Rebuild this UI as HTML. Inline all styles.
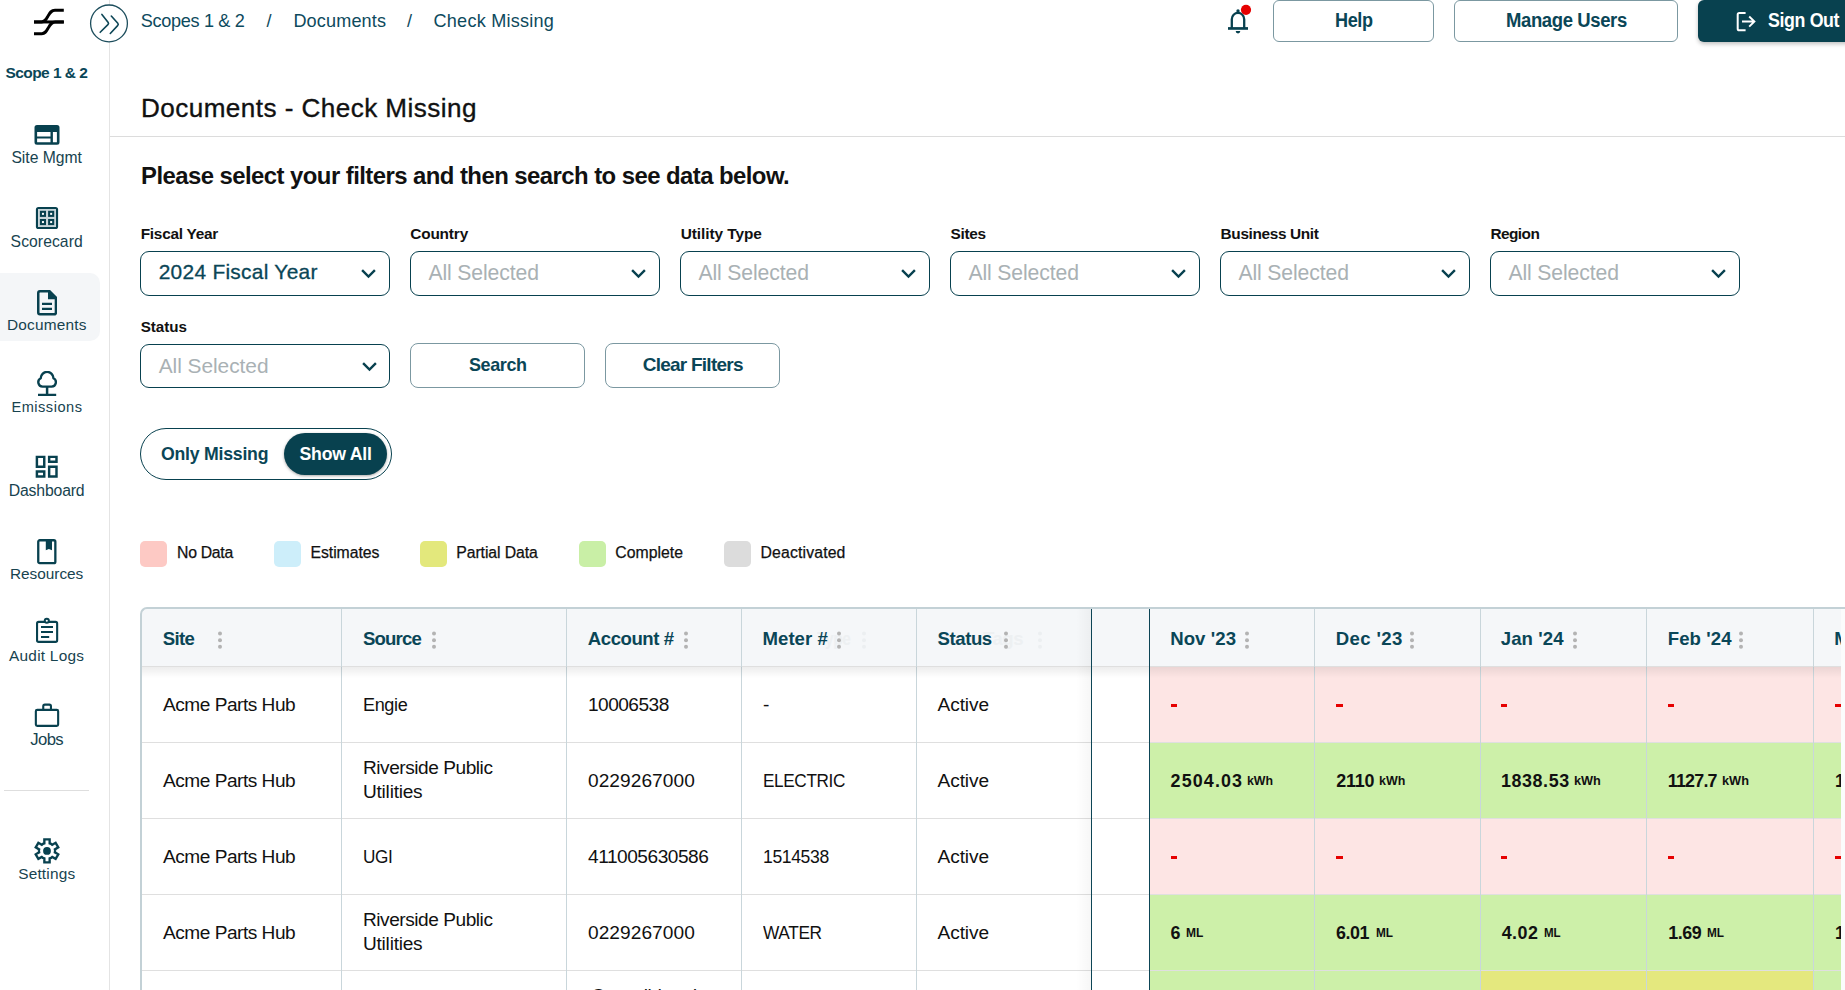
<!DOCTYPE html>
<html><head><meta charset="utf-8"><style>
html,body{margin:0;padding:0;background:#fff;}
body{width:1845px;height:990px;overflow:hidden;position:relative;font-family:"Liberation Sans",sans-serif;}
.t{position:absolute;white-space:pre;line-height:1;}
svg{display:block}
</style></head><body>
<div style="position:absolute;left:109px;top:0;width:1px;height:990px;background:#e4e4e4"></div>
<div style="position:absolute;left:0;top:273px;width:100px;height:68px;border-radius:0 10px 10px 0;background:#f4f6f8"></div>
<svg style="position:absolute;left:0;top:0" width="110" height="50" viewBox="0 0 110 50">
<path d="M34 21.95H63.8" stroke="#000" stroke-width="3" fill="none"/>
<path d="M34 21.9H41.5C44.5 21.9 45.6 20.3 47.6 16.8C49.6 13.3 50.9 10.25 55 10.25H63.8" stroke="#000" stroke-width="3" fill="none"/>
<path d="M34 33.7H41.8C44.8 33.7 45.9 32.1 47.9 28.6C49.9 25.1 51.2 22 55.3 22H63.8" stroke="#000" stroke-width="3" fill="none"/>
</svg>
<div class="t" style="left:5.40px;top:65px;font-size:15.5px;letter-spacing:-0.549px;font-weight:700;color:#0a4657;">Scope 1 &amp; 2</div>
<svg style="position:absolute;left:30px;top:120px" width="34" height="30" viewBox="30 120 34 30"><path fill-rule="evenodd" fill="#08414f" d="M37 125H57A2.5 2.5 0 0 1 59.5 127.5V142.2A2.5 2.5 0 0 1 57 144.7H37A2.5 2.5 0 0 1 34.5 142.2V127.5A2.5 2.5 0 0 1 37 125ZM37.1 132.1V136.6H50.5V132.1ZM37.1 138.6V142.3H50.5V138.6ZM52.9 132.1V142.3H56.9V132.1Z"/></svg>
<svg style="position:absolute;left:34px;top:205px" width="26" height="26" viewBox="34 205 26 26"><rect x="35.9" y="206.9" width="22.2" height="22.2" rx="2.6" fill="#08414f"/><rect x="38" y="209" width="18" height="18" fill="#c9d6da"/><rect x="39.9" y="210.8" width="6.1" height="6.1" fill="#08414f"/><rect x="41.949999999999996" y="212.85000000000002" width="2" height="2" fill="#fff"/><rect x="39.9" y="219.0" width="6.1" height="6.1" fill="#08414f"/><rect x="41.949999999999996" y="221.05" width="2" height="2" fill="#fff"/><rect x="48.1" y="210.8" width="6.1" height="6.1" fill="#08414f"/><rect x="50.15" y="212.85000000000002" width="2" height="2" fill="#fff"/><rect x="48.1" y="219.0" width="6.1" height="6.1" fill="#08414f"/><rect x="50.15" y="221.05" width="2" height="2" fill="#fff"/></svg>
<svg style="position:absolute;left:36.9px;top:290.3px" width="20.2" height="25.5" viewBox="0 0 20.2 25.5"><path d="M2.9 1.25H12L18.95 8.2V22.6A1.65 1.65 0 0 1 17.3 24.25H2.9A1.65 1.65 0 0 1 1.25 22.6V2.9A1.65 1.65 0 0 1 2.9 1.25Z" fill="none" stroke="#08414f" stroke-width="2.5"/><path d="M11 0H13L20.2 7.2V9.2H11Z" fill="#08414f"/><path d="M5 13.85H15M5 18.9H15" stroke="#08414f" stroke-width="2.1"/></svg>
<svg style="position:absolute;left:37px;top:370.5px" width="20.2" height="25.5" viewBox="0 0 20.2 25.5"><path d="M10.1 15.6H5.6A4.4 4.4 0 0 1 3.7 7.3A6.4 6.4 0 0 1 16.5 7.3A4.4 4.4 0 0 1 14.6 15.6Z" fill="none" stroke="#08414f" stroke-width="2.4" stroke-linejoin="round"/><path d="M10.1 15.6V23.5M1 23.9H19.2" stroke="#08414f" stroke-width="2.5"/></svg>
<svg style="position:absolute;left:32.2px;top:452.2px" width="29.4" height="29.4" viewBox="0 0 24 24"><path fill="#08414f" d="M19 5v2h-4V5h4M9 5v6H5V5h4m10 8v6h-4v-6h4M9 17v2H5v-2h4M21 3h-8v6h8V3zM11 3H3v10h8V3zm10 8h-8v10h8V11zm-10 4H3v6h8v-6z"/></svg>
<svg style="position:absolute;left:37.2px;top:539.2px" width="19.6" height="25.4" viewBox="0 0 19.6 25.4"><rect x="1.25" y="1.25" width="17.1" height="22.9" rx="1.5" fill="none" stroke="#08414f" stroke-width="2.3"/><path d="M8.8 1.5H15V11.3L11.9 9.9L8.8 11.3Z" fill="#08414f"/></svg>
<svg style="position:absolute;left:30px;top:614px" width="34" height="34" viewBox="30 614 34 34"><rect x="37.05" y="621.9" width="20.1" height="20" rx="1.6" fill="none" stroke="#08414f" stroke-width="2.1"/><circle cx="46.8" cy="620.7" r="2.05" fill="#fff" stroke="#08414f" stroke-width="2"/><path d="M41 627.05H53M41 632.05H53M41 637H49.2" stroke="#08414f" stroke-width="2.1"/></svg>
<svg style="position:absolute;left:30px;top:698px" width="34" height="34" viewBox="30 698 34 34"><rect x="35.85" y="709.85" width="22.3" height="16" rx="1.4" fill="none" stroke="#08414f" stroke-width="2.1"/><path d="M43.25 709.8V706.2A1.6 1.6 0 0 1 44.85 704.6H49.35A1.6 1.6 0 0 1 50.95 706.2V709.8" fill="none" stroke="#08414f" stroke-width="2.1"/></svg>
<svg style="position:absolute;left:30px;top:834px" width="34" height="34" viewBox="30 834 34 34"><path d="M44.35 843.30 L44.35 839.35 L49.65 839.35 L49.65 843.30 L51.08 843.78 L52.21 844.78 L55.63 842.81 L58.28 847.39 L54.86 849.37 L55.16 850.85 L54.86 852.33 L58.28 854.31 L55.63 858.89 L52.21 856.92 L51.08 857.92 L49.65 858.40 L49.65 862.35 L44.35 862.35 L44.35 858.40 L42.92 857.92 L41.79 856.92 L38.37 858.89 L35.72 854.31 L39.14 852.33 L38.84 850.85 L39.14 849.37 L35.72 847.39 L38.37 842.81 L41.79 844.78 L42.92 843.78Z" fill="none" stroke="#08414f" stroke-width="2.35" stroke-linejoin="miter"/><circle cx="47" cy="850.9" r="3.9" fill="#08414f"/></svg>
<div class="t" style="left:11.40px;top:150px;font-size:15.7px;letter-spacing:-0.006px;color:#17434f;">Site Mgmt</div>
<div class="t" style="left:10.60px;top:234px;font-size:15.7px;letter-spacing:0.076px;color:#17434f;">Scorecard</div>
<div class="t" style="left:7.00px;top:317px;font-size:15.4px;letter-spacing:0.209px;color:#17434f;">Documents</div>
<div class="t" style="left:11.40px;top:400px;font-size:14.6px;letter-spacing:0.512px;color:#17434f;">Emissions</div>
<div class="t" style="left:8.80px;top:483px;font-size:15.8px;letter-spacing:-0.183px;color:#17434f;">Dashboard</div>
<div class="t" style="left:10.00px;top:566px;font-size:15.4px;letter-spacing:-0.039px;color:#17434f;">Resources</div>
<div class="t" style="left:9.00px;top:648px;font-size:15.4px;letter-spacing:0.248px;color:#17434f;">Audit Logs</div>
<div class="t" style="left:30.30px;top:732px;font-size:16.7px;letter-spacing:-0.646px;color:#17434f;">Jobs</div>
<div style="position:absolute;left:4px;top:790px;width:85px;height:1px;background:#dedede"></div>
<div class="t" style="left:18.20px;top:866px;font-size:15.4px;letter-spacing:0.190px;color:#17434f;">Settings</div>
<svg style="position:absolute;left:88px;top:3px" width="42" height="42" viewBox="88 3 42 42">
<circle cx="109" cy="23.4" r="18.4" fill="#fff" stroke="#1c4d5c" stroke-width="1.3"/>
<path d="M101.9 14.4L108.2 22.4Q109 23.6 107.9 24.6L100.2 32.3M111.3 16L117.8 23.3Q118.8 24.5 117.6 25.6L110.3 33.5" fill="none" stroke="#0d4656" stroke-width="1.6" stroke-linecap="round"/>
</svg>
<div class="t" style="left:140.80px;top:12px;font-size:18.1px;letter-spacing:-0.327px;color:#0d4a5d;">Scopes 1 &amp; 2</div>
<div class="t" style="left:266.50px;top:12px;font-size:18.1px;letter-spacing:0.000px;color:#0d4a5d;">/</div>
<div class="t" style="left:293.40px;top:12px;font-size:18.1px;letter-spacing:0.139px;color:#0d4a5d;">Documents</div>
<div class="t" style="left:407.00px;top:12px;font-size:18.1px;letter-spacing:0.000px;color:#0d4a5d;">/</div>
<div class="t" style="left:433.50px;top:12px;font-size:18.1px;letter-spacing:0.229px;color:#0d4a5d;">Check Missing</div>
<svg style="position:absolute;left:1226px;top:4px" width="30" height="34" viewBox="1226 4 30 34">
<path d="M1231.8 28.4V19.2A6.2 6.3 0 0 1 1244.2 19.2V28.4" fill="none" stroke="#08414f" stroke-width="2.3"/>
<path d="M1228 28.45H1248" stroke="#08414f" stroke-width="2.7"/>
<circle cx="1238" cy="10.9" r="1.7" fill="#08414f"/>
<path d="M1235.7 31.1H1240.3A2.3 2.3 0 0 1 1235.7 31.1Z" fill="#08414f"/>
<circle cx="1246" cy="9.8" r="5.1" fill="#e60000"/>
</svg>
<div style="position:absolute;left:1273px;top:0px;width:159px;height:40px;border:1px solid #7b98a1;border-radius:6px;background:#fff"></div>
<div class="t" style="left:1335.30px;top:11px;font-size:19.6px;letter-spacing:-0.400px;font-weight:700;color:#0a4657;transform:scaleX(0.9216);transform-origin:0.00px 0;">Help</div>
<div style="position:absolute;left:1454px;top:0px;width:222px;height:40px;border:1px solid #7b98a1;border-radius:6px;background:#fff"></div>
<div class="t" style="left:1505.60px;top:11px;font-size:19.6px;letter-spacing:-0.400px;font-weight:700;color:#0a4657;transform:scaleX(0.9433);transform-origin:0.00px 0;">Manage Users</div>
<div style="position:absolute;left:1698px;top:0px;width:170px;height:42px;border-radius:6px;background:#08414f;box-shadow:0 2px 4px rgba(0,0,0,0.25)"></div>
<svg style="position:absolute;left:1734px;top:10px" width="24" height="24" viewBox="1734 10 24 24">
<path d="M1745.6 13H1739.3A1.6 1.6 0 0 0 1737.7 14.6V28.7A1.6 1.6 0 0 0 1739.3 30.3H1745.6" fill="none" stroke="#fff" stroke-width="2"/>
<path d="M1742 21.5H1754.2M1749.2 16.5L1754.4 21.5L1749.2 26.6" fill="none" stroke="#fff" stroke-width="1.9"/>
</svg>
<div class="t" style="left:1768.40px;top:11px;font-size:19.3px;letter-spacing:-0.400px;font-weight:700;color:#fff;transform:scaleX(0.9229);transform-origin:0.00px 0;">Sign Out</div>
<div class="t" style="left:141.00px;top:95px;font-size:26.1px;letter-spacing:0.444px;color:#111;-webkit-text-stroke:0.35px #111;">Documents - Check Missing</div>
<div style="position:absolute;left:110px;top:136px;width:1735px;height:1px;background:#dcdcdc"></div>
<div class="t" style="left:141.00px;top:164px;font-size:23.9px;letter-spacing:-0.548px;font-weight:700;color:#111;">Please select your filters and then search to see data below.</div>
<div style="position:absolute;left:140px;top:250.5px;width:250px;height:45px;box-sizing:border-box;border:1.5px solid #08414f;border-radius:9px;background:#fff"></div>
<svg style="position:absolute;left:360px;top:267.3px" width="18" height="14" viewBox="0 0 18 14"><path d="M2.1 3.1L8.5 9.5L14.9 3.1" fill="none" stroke="#08414f" stroke-width="2.4"/></svg>
<div style="position:absolute;left:410px;top:250.5px;width:250px;height:45px;box-sizing:border-box;border:1.5px solid #08414f;border-radius:9px;background:#fff"></div>
<svg style="position:absolute;left:630px;top:267.3px" width="18" height="14" viewBox="0 0 18 14"><path d="M2.1 3.1L8.5 9.5L14.9 3.1" fill="none" stroke="#08414f" stroke-width="2.4"/></svg>
<div style="position:absolute;left:680px;top:250.5px;width:250px;height:45px;box-sizing:border-box;border:1.5px solid #08414f;border-radius:9px;background:#fff"></div>
<svg style="position:absolute;left:900px;top:267.3px" width="18" height="14" viewBox="0 0 18 14"><path d="M2.1 3.1L8.5 9.5L14.9 3.1" fill="none" stroke="#08414f" stroke-width="2.4"/></svg>
<div style="position:absolute;left:950px;top:250.5px;width:250px;height:45px;box-sizing:border-box;border:1.5px solid #08414f;border-radius:9px;background:#fff"></div>
<svg style="position:absolute;left:1170px;top:267.3px" width="18" height="14" viewBox="0 0 18 14"><path d="M2.1 3.1L8.5 9.5L14.9 3.1" fill="none" stroke="#08414f" stroke-width="2.4"/></svg>
<div style="position:absolute;left:1220px;top:250.5px;width:250px;height:45px;box-sizing:border-box;border:1.5px solid #08414f;border-radius:9px;background:#fff"></div>
<svg style="position:absolute;left:1440px;top:267.3px" width="18" height="14" viewBox="0 0 18 14"><path d="M2.1 3.1L8.5 9.5L14.9 3.1" fill="none" stroke="#08414f" stroke-width="2.4"/></svg>
<div style="position:absolute;left:1490px;top:250.5px;width:250px;height:45px;box-sizing:border-box;border:1.5px solid #08414f;border-radius:9px;background:#fff"></div>
<svg style="position:absolute;left:1710px;top:267.3px" width="18" height="14" viewBox="0 0 18 14"><path d="M2.1 3.1L8.5 9.5L14.9 3.1" fill="none" stroke="#08414f" stroke-width="2.4"/></svg>
<div class="t" style="left:140.70px;top:226px;font-size:15.4px;letter-spacing:-0.263px;font-weight:700;color:#111;">Fiscal Year</div>
<div class="t" style="left:410.20px;top:226px;font-size:15.4px;letter-spacing:-0.160px;font-weight:700;color:#111;">Country</div>
<div class="t" style="left:680.70px;top:226px;font-size:15.4px;letter-spacing:-0.059px;font-weight:700;color:#111;">Utility Type</div>
<div class="t" style="left:950.40px;top:226px;font-size:15.4px;letter-spacing:-0.276px;font-weight:700;color:#111;">Sites</div>
<div class="t" style="left:1220.60px;top:226px;font-size:15.4px;letter-spacing:-0.360px;font-weight:700;color:#111;">Business Unit</div>
<div class="t" style="left:1490.40px;top:226px;font-size:15.4px;letter-spacing:-0.541px;font-weight:700;color:#111;">Region</div>
<div class="t" style="left:158.70px;top:262px;font-size:20.9px;letter-spacing:0.283px;color:#0a4657;-webkit-text-stroke:0.3px #0a4657;">2024 Fiscal Year</div>
<div class="t" style="left:428.40px;top:262px;font-size:21.2px;letter-spacing:-0.121px;color:#a9b1b4;">All Selected</div>
<div class="t" style="left:698.40px;top:262px;font-size:21.2px;letter-spacing:-0.121px;color:#a9b1b4;">All Selected</div>
<div class="t" style="left:968.40px;top:262px;font-size:21.2px;letter-spacing:-0.121px;color:#a9b1b4;">All Selected</div>
<div class="t" style="left:1238.40px;top:262px;font-size:21.2px;letter-spacing:-0.121px;color:#a9b1b4;">All Selected</div>
<div class="t" style="left:1508.40px;top:262px;font-size:21.2px;letter-spacing:-0.121px;color:#a9b1b4;">All Selected</div>
<div class="t" style="left:140.70px;top:319px;font-size:15.2px;letter-spacing:-0.027px;font-weight:700;color:#111;">Status</div>
<div style="position:absolute;left:140px;top:343.5px;width:250px;height:44.3px;box-sizing:border-box;border:1.5px solid #08414f;border-radius:9px;background:#fff"></div>
<svg style="position:absolute;left:361px;top:360.3px" width="18" height="14" viewBox="0 0 18 14"><path d="M2.1 3.1L8.5 9.5L14.9 3.1" fill="none" stroke="#08414f" stroke-width="2.4"/></svg>
<div class="t" style="left:158.70px;top:356px;font-size:20.9px;letter-spacing:-0.041px;color:#a9b1b4;">All Selected</div>
<div style="position:absolute;left:410px;top:343.3px;width:175px;height:44.3px;box-sizing:border-box;border:1px solid #7b98a1;border-radius:8px;background:#fff"></div>
<div style="position:absolute;left:605px;top:343.3px;width:175px;height:44.3px;box-sizing:border-box;border:1px solid #7b98a1;border-radius:8px;background:#fff"></div>
<div class="t" style="left:468.70px;top:355px;font-size:19.0px;letter-spacing:-0.400px;font-weight:700;color:#0a4657;transform:scaleX(0.9468);transform-origin:0.00px 0;">Search</div>
<div class="t" style="left:642.70px;top:355px;font-size:19.0px;letter-spacing:-0.752px;font-weight:700;color:#0a4657;">Clear Filters</div>
<div style="position:absolute;left:140px;top:428px;width:249.5px;height:50px;border:1.2px solid #08414f;border-radius:27px;background:#fff"></div>
<div style="position:absolute;left:284px;top:433px;width:103px;height:42px;border-radius:21px;background:#08414f;box-shadow:0 1px 3px rgba(0,0,0,0.35)"></div>
<div class="t" style="left:160.90px;top:446px;font-size:17.7px;letter-spacing:-0.226px;font-weight:700;color:#0a4657;">Only Missing</div>
<div class="t" style="left:299.50px;top:446px;font-size:17.7px;letter-spacing:-0.225px;font-weight:700;color:#fff;">Show All</div>
<div style="position:absolute;left:140px;top:541px;width:26.5px;height:26px;border-radius:5px;background:#fdc9c4"></div>
<div class="t" style="left:177.00px;top:545px;font-size:15.8px;letter-spacing:-0.281px;color:#111;-webkit-text-stroke:0.25px #111;">No Data</div>
<div style="position:absolute;left:274px;top:541px;width:26.5px;height:26px;border-radius:5px;background:#cdeefa"></div>
<div class="t" style="left:310.50px;top:545px;font-size:15.8px;letter-spacing:-0.058px;color:#111;-webkit-text-stroke:0.25px #111;">Estimates</div>
<div style="position:absolute;left:420px;top:541px;width:26.5px;height:26px;border-radius:5px;background:#e3e87c"></div>
<div class="t" style="left:456.30px;top:545px;font-size:15.8px;letter-spacing:-0.085px;color:#111;-webkit-text-stroke:0.25px #111;">Partial Data</div>
<div style="position:absolute;left:579px;top:541px;width:26.5px;height:26px;border-radius:5px;background:#c9efa6"></div>
<div class="t" style="left:615.30px;top:545px;font-size:15.8px;letter-spacing:0.011px;color:#111;-webkit-text-stroke:0.25px #111;">Complete</div>
<div style="position:absolute;left:724px;top:541px;width:26.5px;height:26px;border-radius:5px;background:#dcdcdc"></div>
<div class="t" style="left:760.50px;top:545px;font-size:15.8px;letter-spacing:0.148px;color:#111;-webkit-text-stroke:0.25px #111;">Deactivated</div>
<div style="position:absolute;left:140px;top:607px;width:1720px;height:60px;background:#f5f7f9;border-top:2px solid #c3d1d6;border-left:2px solid #c3d1d6;border-top-left-radius:7px;box-sizing:border-box"></div>
<div style="position:absolute;left:140px;top:667px;width:2px;height:330px;background:#c3d1d6"></div>
<div style="position:absolute;left:1149px;top:667px;width:165px;height:76px;background:#fde5e4"></div>
<div style="position:absolute;left:1314px;top:667px;width:166px;height:76px;background:#fde5e4"></div>
<div style="position:absolute;left:1480px;top:667px;width:166px;height:76px;background:#fde5e4"></div>
<div style="position:absolute;left:1646px;top:667px;width:167px;height:76px;background:#fde5e4"></div>
<div style="position:absolute;left:1813px;top:667px;width:167px;height:76px;background:#fde5e4"></div>
<div style="position:absolute;left:1149px;top:743px;width:165px;height:76px;background:#cdf0a9"></div>
<div style="position:absolute;left:1314px;top:743px;width:166px;height:76px;background:#cdf0a9"></div>
<div style="position:absolute;left:1480px;top:743px;width:166px;height:76px;background:#cdf0a9"></div>
<div style="position:absolute;left:1646px;top:743px;width:167px;height:76px;background:#cdf0a9"></div>
<div style="position:absolute;left:1813px;top:743px;width:167px;height:76px;background:#cdf0a9"></div>
<div style="position:absolute;left:1149px;top:819px;width:165px;height:76px;background:#fde5e4"></div>
<div style="position:absolute;left:1314px;top:819px;width:166px;height:76px;background:#fde5e4"></div>
<div style="position:absolute;left:1480px;top:819px;width:166px;height:76px;background:#fde5e4"></div>
<div style="position:absolute;left:1646px;top:819px;width:167px;height:76px;background:#fde5e4"></div>
<div style="position:absolute;left:1813px;top:819px;width:167px;height:76px;background:#fde5e4"></div>
<div style="position:absolute;left:1149px;top:895px;width:165px;height:76px;background:#cdf0a9"></div>
<div style="position:absolute;left:1314px;top:895px;width:166px;height:76px;background:#cdf0a9"></div>
<div style="position:absolute;left:1480px;top:895px;width:166px;height:76px;background:#cdf0a9"></div>
<div style="position:absolute;left:1646px;top:895px;width:167px;height:76px;background:#cdf0a9"></div>
<div style="position:absolute;left:1813px;top:895px;width:167px;height:76px;background:#cdf0a9"></div>
<div style="position:absolute;left:1149px;top:971px;width:165px;height:76px;background:#cdf0a9"></div>
<div style="position:absolute;left:1314px;top:971px;width:166px;height:76px;background:#cdf0a9"></div>
<div style="position:absolute;left:1480px;top:971px;width:166px;height:76px;background:#e4e87e"></div>
<div style="position:absolute;left:1646px;top:971px;width:167px;height:76px;background:#e4e87e"></div>
<div style="position:absolute;left:1813px;top:971px;width:167px;height:76px;background:#cdf0a9"></div>
<div style="position:absolute;left:142px;top:666px;width:1703px;height:1px;background:#dfdfdf"></div>
<div style="position:absolute;left:142px;top:742px;width:1703px;height:1px;background:#dfdfdf"></div>
<div style="position:absolute;left:142px;top:818px;width:1703px;height:1px;background:#dfdfdf"></div>
<div style="position:absolute;left:142px;top:894px;width:1703px;height:1px;background:#dfdfdf"></div>
<div style="position:absolute;left:142px;top:970px;width:1703px;height:1px;background:#dfdfdf"></div>
<div style="position:absolute;left:341px;top:609px;width:1px;height:390px;background:#c9d6db"></div>
<div style="position:absolute;left:566px;top:609px;width:1px;height:390px;background:#c9d6db"></div>
<div style="position:absolute;left:741px;top:609px;width:1px;height:390px;background:#c9d6db"></div>
<div style="position:absolute;left:916px;top:609px;width:1px;height:390px;background:#c9d6db"></div>
<div style="position:absolute;left:1314px;top:609px;width:1px;height:390px;background:#c9d6db"></div>
<div style="position:absolute;left:1480px;top:609px;width:1px;height:390px;background:#c9d6db"></div>
<div style="position:absolute;left:1646px;top:609px;width:1px;height:390px;background:#c9d6db"></div>
<div style="position:absolute;left:1813px;top:609px;width:1px;height:390px;background:#c9d6db"></div>
<div style="position:absolute;left:142px;top:667px;width:1699px;height:11px;background:linear-gradient(rgba(0,0,0,0.07),rgba(0,0,0,0))"></div>
<div style="position:absolute;left:1076px;top:609px;width:15px;height:390px;background:linear-gradient(90deg,rgba(0,0,0,0),rgba(0,0,0,0.035))"></div>
<div style="position:absolute;left:1091px;top:609px;width:1.2px;height:390px;background:#0d4556"></div>
<div style="position:absolute;left:1149px;top:609px;width:1.2px;height:390px;background:#0d4556"></div>
<div style="position:absolute;left:1841px;top:609px;width:10px;height:390px;background:#fafbfb"></div>
<div class="t" style="left:817.00px;top:630px;font-size:18.6px;letter-spacing:-0.400px;font-weight:700;color:#edf0f2;transform:scaleX(0.8326);transform-origin:0.00px 0;">Type</div>
<div class="t" style="left:983.00px;top:630px;font-size:18.6px;letter-spacing:-0.479px;font-weight:700;color:#edf0f2;">Tags</div>
<svg style="position:absolute;left:861px;top:630px" width="6" height="20" viewBox="0 0 6 20"><circle cx="3" cy="3.6" r="2" fill="#eceff1"/><circle cx="3" cy="10.2" r="2" fill="#eceff1"/><circle cx="3" cy="16.8" r="2" fill="#eceff1"/></svg>
<svg style="position:absolute;left:1037px;top:630px" width="6" height="20" viewBox="0 0 6 20"><circle cx="3" cy="3.6" r="2" fill="#eceff1"/><circle cx="3" cy="10.2" r="2" fill="#eceff1"/><circle cx="3" cy="16.8" r="2" fill="#eceff1"/></svg>
<div class="t" style="left:162.80px;top:630px;font-size:18.6px;letter-spacing:-0.710px;font-weight:700;color:#0a4657;">Site</div>
<svg style="position:absolute;left:216.9px;top:630px" width="6" height="20" viewBox="0 0 6 20"><circle cx="3" cy="3.6" r="2" fill="#b3b3b3"/><circle cx="3" cy="10.2" r="2" fill="#b3b3b3"/><circle cx="3" cy="16.8" r="2" fill="#b3b3b3"/></svg>
<div class="t" style="left:363.00px;top:630px;font-size:18.6px;letter-spacing:-0.851px;font-weight:700;color:#0a4657;">Source</div>
<svg style="position:absolute;left:430.8px;top:630px" width="6" height="20" viewBox="0 0 6 20"><circle cx="3" cy="3.6" r="2" fill="#b3b3b3"/><circle cx="3" cy="10.2" r="2" fill="#b3b3b3"/><circle cx="3" cy="16.8" r="2" fill="#b3b3b3"/></svg>
<div class="t" style="left:587.80px;top:630px;font-size:18.6px;letter-spacing:-0.454px;font-weight:700;color:#0a4657;">Account #</div>
<svg style="position:absolute;left:682.8px;top:630px" width="6" height="20" viewBox="0 0 6 20"><circle cx="3" cy="3.6" r="2" fill="#b3b3b3"/><circle cx="3" cy="10.2" r="2" fill="#b3b3b3"/><circle cx="3" cy="16.8" r="2" fill="#b3b3b3"/></svg>
<div class="t" style="left:762.50px;top:630px;font-size:18.6px;letter-spacing:0.033px;font-weight:700;color:#0a4657;">Meter #</div>
<svg style="position:absolute;left:835.6px;top:630px" width="6" height="20" viewBox="0 0 6 20"><circle cx="3" cy="3.6" r="2" fill="#b3b3b3"/><circle cx="3" cy="10.2" r="2" fill="#b3b3b3"/><circle cx="3" cy="16.8" r="2" fill="#b3b3b3"/></svg>
<div class="t" style="left:937.50px;top:630px;font-size:18.6px;letter-spacing:-0.425px;font-weight:700;color:#0a4657;">Status</div>
<svg style="position:absolute;left:1003.3px;top:630px" width="6" height="20" viewBox="0 0 6 20"><circle cx="3" cy="3.6" r="2" fill="#b3b3b3"/><circle cx="3" cy="10.2" r="2" fill="#b3b3b3"/><circle cx="3" cy="16.8" r="2" fill="#b3b3b3"/></svg>
<div class="t" style="left:1170.20px;top:630px;font-size:18.6px;letter-spacing:0.070px;font-weight:700;color:#0a4657;">Nov &#39;23</div>
<svg style="position:absolute;left:1243.7px;top:630px" width="6" height="20" viewBox="0 0 6 20"><circle cx="3" cy="3.6" r="2" fill="#b3b3b3"/><circle cx="3" cy="10.2" r="2" fill="#b3b3b3"/><circle cx="3" cy="16.8" r="2" fill="#b3b3b3"/></svg>
<div class="t" style="left:1335.80px;top:630px;font-size:18.6px;letter-spacing:0.375px;font-weight:700;color:#0a4657;">Dec &#39;23</div>
<svg style="position:absolute;left:1408.8px;top:630px" width="6" height="20" viewBox="0 0 6 20"><circle cx="3" cy="3.6" r="2" fill="#b3b3b3"/><circle cx="3" cy="10.2" r="2" fill="#b3b3b3"/><circle cx="3" cy="16.8" r="2" fill="#b3b3b3"/></svg>
<div class="t" style="left:1500.80px;top:630px;font-size:18.6px;letter-spacing:0.065px;font-weight:700;color:#0a4657;">Jan &#39;24</div>
<svg style="position:absolute;left:1571.8px;top:630px" width="6" height="20" viewBox="0 0 6 20"><circle cx="3" cy="3.6" r="2" fill="#b3b3b3"/><circle cx="3" cy="10.2" r="2" fill="#b3b3b3"/><circle cx="3" cy="16.8" r="2" fill="#b3b3b3"/></svg>
<div class="t" style="left:1667.80px;top:630px;font-size:18.6px;letter-spacing:0.061px;font-weight:700;color:#0a4657;">Feb &#39;24</div>
<svg style="position:absolute;left:1738.3px;top:630px" width="6" height="20" viewBox="0 0 6 20"><circle cx="3" cy="3.6" r="2" fill="#b3b3b3"/><circle cx="3" cy="10.2" r="2" fill="#b3b3b3"/><circle cx="3" cy="16.8" r="2" fill="#b3b3b3"/></svg>
<div class="t" style="left:1834.20px;top:630px;font-size:18.6px;letter-spacing:0.000px;font-weight:700;color:#0a4657;">M</div>
<div class="t" style="left:163.00px;top:695px;font-size:19.1px;letter-spacing:-0.490px;color:#111;">Acme Parts Hub</div>
<div class="t" style="left:937.60px;top:695px;font-size:19.1px;letter-spacing:-0.109px;color:#111;">Active</div>
<div class="t" style="left:163.00px;top:771px;font-size:19.1px;letter-spacing:-0.490px;color:#111;">Acme Parts Hub</div>
<div class="t" style="left:937.60px;top:771px;font-size:19.1px;letter-spacing:-0.109px;color:#111;">Active</div>
<div class="t" style="left:163.00px;top:847px;font-size:19.1px;letter-spacing:-0.490px;color:#111;">Acme Parts Hub</div>
<div class="t" style="left:937.60px;top:847px;font-size:19.1px;letter-spacing:-0.109px;color:#111;">Active</div>
<div class="t" style="left:163.00px;top:923px;font-size:19.1px;letter-spacing:-0.490px;color:#111;">Acme Parts Hub</div>
<div class="t" style="left:937.60px;top:923px;font-size:19.1px;letter-spacing:-0.109px;color:#111;">Active</div>
<div class="t" style="left:363.00px;top:695px;font-size:19.1px;letter-spacing:-0.400px;color:#111;transform:scaleX(0.9472);transform-origin:0.00px 0;">Engie</div>
<div class="t" style="left:588.00px;top:695px;font-size:19.1px;letter-spacing:-0.528px;color:#111;">10006538</div>
<div class="t" style="left:763.00px;top:695px;font-size:19.1px;letter-spacing:-0.490px;color:#111;">-</div>
<div class="t" style="left:363.00px;top:758px;font-size:19.1px;letter-spacing:-0.463px;color:#111;">Riverside Public</div>
<div class="t" style="left:363.00px;top:782px;font-size:19.1px;letter-spacing:-0.237px;color:#111;">Utilities</div>
<div class="t" style="left:588.00px;top:771px;font-size:19.1px;letter-spacing:0.067px;color:#111;">0229267000</div>
<div class="t" style="left:763.00px;top:771px;font-size:19.1px;letter-spacing:-0.400px;color:#111;transform:scaleX(0.8991);transform-origin:0.00px 0;">ELECTRIC</div>
<div class="t" style="left:363.00px;top:847px;font-size:19.1px;letter-spacing:-0.400px;color:#111;transform:scaleX(0.9007);transform-origin:0.00px 0;">UGI</div>
<div class="t" style="left:588.00px;top:847px;font-size:19.1px;letter-spacing:-0.469px;color:#111;">411005630586</div>
<div class="t" style="left:763.00px;top:847px;font-size:19.1px;letter-spacing:-0.400px;color:#111;transform:scaleX(0.9195);transform-origin:0.00px 0;">1514538</div>
<div class="t" style="left:363.00px;top:910px;font-size:19.1px;letter-spacing:-0.463px;color:#111;">Riverside Public</div>
<div class="t" style="left:363.00px;top:934px;font-size:19.1px;letter-spacing:-0.237px;color:#111;">Utilities</div>
<div class="t" style="left:588.00px;top:923px;font-size:19.1px;letter-spacing:0.067px;color:#111;">0229267000</div>
<div class="t" style="left:763.00px;top:923px;font-size:19.1px;letter-spacing:-0.400px;color:#111;transform:scaleX(0.9057);transform-origin:0.00px 0;">WATER</div>
<div class="t" style="left:591.00px;top:986px;font-size:19.1px;letter-spacing:-0.490px;color:#111;">Consolidated</div>
<div class="t" style="left:1170.60px;top:773px;font-size:17.9px;letter-spacing:1.132px;font-weight:700;color:#111;">2504.03</div>
<div class="t" style="left:1246.90px;top:774px;font-size:13.4px;letter-spacing:0.000px;font-weight:700;color:#111;transform:scaleX(0.9231);transform-origin:0.00px 0;">kWh</div>
<div class="t" style="left:1336.20px;top:773px;font-size:17.9px;letter-spacing:-0.214px;font-weight:700;color:#111;">2110</div>
<div class="t" style="left:1379.20px;top:774px;font-size:13.4px;letter-spacing:0.000px;font-weight:700;color:#111;transform:scaleX(0.9302);transform-origin:0.00px 0;">kWh</div>
<div class="t" style="left:1500.90px;top:773px;font-size:17.9px;letter-spacing:0.599px;font-weight:700;color:#111;">1838.53</div>
<div class="t" style="left:1574.20px;top:774px;font-size:13.4px;letter-spacing:0.000px;font-weight:700;color:#111;transform:scaleX(0.9514);transform-origin:0.00px 0;">kWh</div>
<div class="t" style="left:1667.80px;top:773px;font-size:17.9px;letter-spacing:-0.798px;font-weight:700;color:#111;">1127.7</div>
<div class="t" style="left:1722.20px;top:774px;font-size:13.4px;letter-spacing:0.000px;font-weight:700;color:#111;transform:scaleX(0.9549);transform-origin:0.00px 0;">kWh</div>
<div class="t" style="left:1835.00px;top:773px;font-size:17.9px;letter-spacing:0.000px;font-weight:700;color:#111;">1</div>
<div class="t" style="left:1170.60px;top:925px;font-size:17.9px;letter-spacing:0.000px;font-weight:700;color:#111;">6</div>
<div class="t" style="left:1185.70px;top:926px;font-size:13.4px;letter-spacing:0.000px;font-weight:700;color:#111;transform:scaleX(0.8986);transform-origin:0.00px 0;">ML</div>
<div class="t" style="left:1336.10px;top:925px;font-size:17.9px;letter-spacing:-0.505px;font-weight:700;color:#111;">6.01</div>
<div class="t" style="left:1375.70px;top:926px;font-size:13.4px;letter-spacing:0.000px;font-weight:700;color:#111;transform:scaleX(0.8831);transform-origin:0.00px 0;">ML</div>
<div class="t" style="left:1501.70px;top:925px;font-size:17.9px;letter-spacing:0.462px;font-weight:700;color:#111;">4.02</div>
<div class="t" style="left:1543.90px;top:926px;font-size:13.4px;letter-spacing:0.000px;font-weight:700;color:#111;transform:scaleX(0.8625);transform-origin:0.00px 0;">ML</div>
<div class="t" style="left:1668.30px;top:925px;font-size:17.9px;letter-spacing:-0.472px;font-weight:700;color:#111;">1.69</div>
<div class="t" style="left:1707.20px;top:926px;font-size:13.4px;letter-spacing:0.000px;font-weight:700;color:#111;transform:scaleX(0.8831);transform-origin:0.00px 0;">ML</div>
<div class="t" style="left:1835.00px;top:925px;font-size:17.9px;letter-spacing:0.000px;font-weight:700;color:#111;">1</div>
<div style="position:absolute;left:1170.8px;top:704.2px;width:6.2px;height:2.6px;background:#e60000"></div>
<div style="position:absolute;left:1336.4px;top:704.2px;width:6.2px;height:2.6px;background:#e60000"></div>
<div style="position:absolute;left:1501.0px;top:704.2px;width:6.2px;height:2.6px;background:#e60000"></div>
<div style="position:absolute;left:1668.1000000000001px;top:704.2px;width:6.2px;height:2.6px;background:#e60000"></div>
<div style="position:absolute;left:1835.2px;top:704.2px;width:6.2px;height:2.6px;background:#e60000"></div>
<div style="position:absolute;left:1170.8px;top:856.2px;width:6.2px;height:2.6px;background:#e60000"></div>
<div style="position:absolute;left:1336.4px;top:856.2px;width:6.2px;height:2.6px;background:#e60000"></div>
<div style="position:absolute;left:1501.0px;top:856.2px;width:6.2px;height:2.6px;background:#e60000"></div>
<div style="position:absolute;left:1668.1000000000001px;top:856.2px;width:6.2px;height:2.6px;background:#e60000"></div>
<div style="position:absolute;left:1835.2px;top:856.2px;width:6.2px;height:2.6px;background:#e60000"></div>
<div style="position:absolute;left:1841px;top:609px;width:10px;height:390px;background:#fbfcfc"></div>
</body></html>
